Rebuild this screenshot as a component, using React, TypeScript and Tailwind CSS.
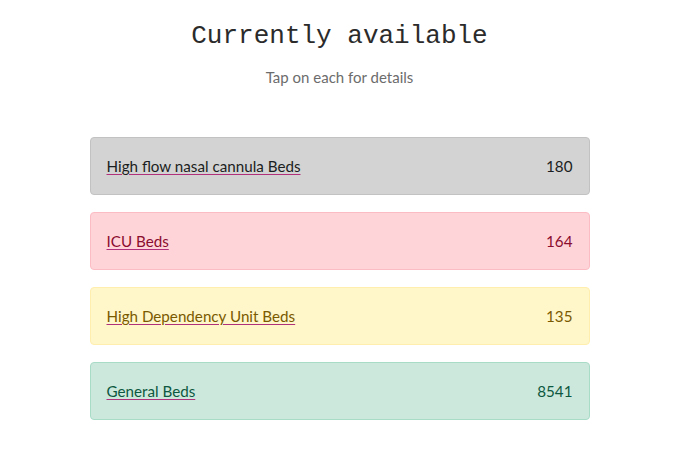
const beds = [
  { name: "High flow nasal cannula Beds", count: 180, box: "bg-[#d3d3d3] border-[#c2c2c2] text-[#1b1e21]" },
  { name: "ICU Beds", count: 164, box: "bg-[#ffd4d9] border-[#fcbcc4] text-[#8a0c2e]" },
  { name: "High Dependency Unit Beds", count: 135, box: "bg-[#fff6c9] border-[#ffeeae] text-[#7a5a00]" },
  { name: "General Beds", count: 8541, box: "bg-[#cce8dd] border-[#a9dcc7] text-[#0d5840]" },
];

export default function App() {
  return (
    <main className="min-h-screen bg-white font-['Lato','Open_Sans',sans-serif]">
      <div className="pt-[21px] text-center">
        <h1 className="font-['Liberation_Mono',monospace] text-[26px] leading-[30px] text-[#2b2b2b]">
          Currently available
        </h1>
        <p className="mt-[15px] text-[15px] leading-[22px] text-[#6c6c6c]">Tap on each for details</p>
      </div>

      <div className="mx-auto mt-[49px] flex w-[500px] flex-col gap-[17px]">
        {beds.map((b) => (
          <div
            key={b.name}
            className={`flex items-center justify-between rounded border px-4 py-4 text-[15.2px] leading-6 ${b.box}`}
          >
            <a href="#" className="underline decoration-[#b0307a] underline-offset-2">
              {b.name}
            </a>
            <span>{b.count}</span>
          </div>
        ))}
      </div>
    </main>
  );
}
